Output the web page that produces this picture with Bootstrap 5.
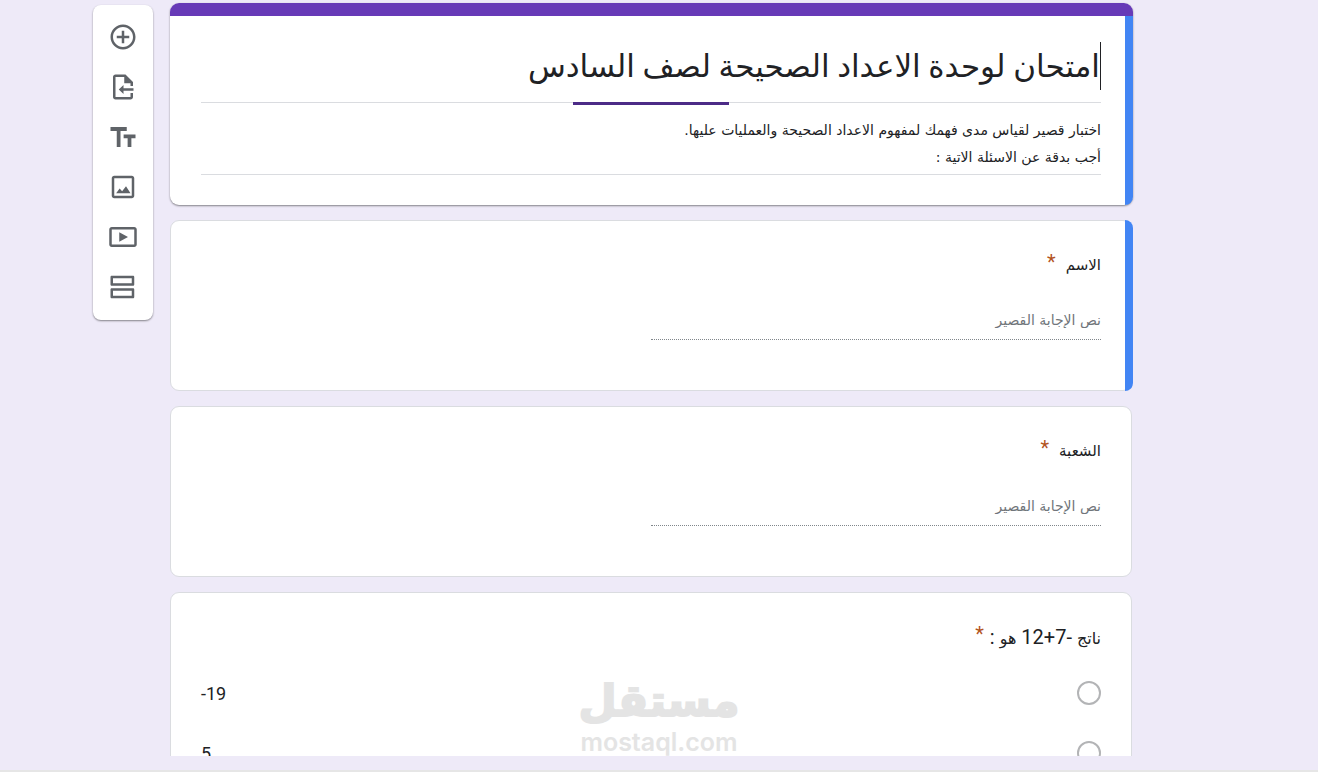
<!DOCTYPE html>
<html lang="ar" dir="rtl">
<head>
<meta charset="utf-8">
<meta name="viewport" content="width=device-width, initial-scale=1">
<title>امتحان لوحدة الاعداد الصحيحة</title>
<link href="https://cdn.jsdelivr.net/npm/bootstrap@5.3.0/dist/css/bootstrap.min.css" rel="stylesheet">
<style>
  body { background: #eeeaf8; color: #202124; font-family: Roboto, "DejaVu Sans", sans-serif; font-size: 15px; }
  .editor { border-bottom: 2px solid #e6e6e6; padding-bottom: 14px; }
  .workspace { padding: 3px 186px 0 93px; gap: 17px; direction: ltr; }
  .tools { width: 60px; margin-top: 2px; padding: 7px 0 8px; border-radius: 8px; box-shadow: 0 1px 2px rgba(0,0,0,.45); }
  .tool { height: 50px; color: #5f6368; }
  .tool svg { width: 30px; height: 30px; fill: currentColor; display: block; }
  .panel { border: 1px solid #dadce0; border-radius: 9px; padding: 29px 30px; }
  .questions { gap: 15px; }
  .lead-panel { border: 0; box-shadow: 0 1px 2px rgba(0,0,0,.45); margin-right: -1px; padding: 39px 32px 30px 31px; }
  .lead-panel::before { content: ""; position: absolute; inset: 0 0 auto 0; height: 13px; background: #673ab7; border-radius: 9px 9px 0 0; }
  .linked::after { content: ""; position: absolute; top: -1px; bottom: -1px; right: -2px; width: 8px; background: #4285f4; border-radius: 0 9px 9px 0; }
  .lead-panel.linked::after { top: 13px; bottom: 0; right: 0; border-radius: 0 0 9px 0; }
  .plain-field { border: 0; background: transparent; padding: 0; outline: 0; color: inherit; display: block; width: 100%; border-radius: 0; }
  .title-wrap { border-bottom: 1px solid #dadce0; padding-bottom: 12px; }
  .title-wrap::after { content: ""; position: absolute; bottom: -3px; left: 41.3%; width: 17.4%; height: 3px; background: #4c2b87; }
  .title-field { height: 48px; font-size: 31px; border-right: 1px solid #202124; }
  .about-field, .reply { font-family: "DejaVu Sans", sans-serif; font-size: 14px; }
  .about-field { height: 56px; margin-top: 14px; line-height: 27px; resize: none; overflow: hidden; }
  .about-wrap { border-bottom: 1px solid #dadce0; padding-bottom: 1px; }
  .ask { height: 30px; font-size: 15px; gap: 10px; }
  .ask.tight { font-size: 20px; gap: 6px; }
  .ask .ar { font-size: 16px; }
  .must { color: #b3541e; font-size: 20px; padding-bottom: 6px; }
  .short-panel { height: 171px; }
  .reply { width: 50%; height: 38px; margin-top: 22px; padding-bottom: 2px; border-bottom: 1px dotted #80868b; }
  .reply::placeholder { color: #70757a; opacity: 1; }
  .choices { padding-top: 11px; }
  .choice { height: 60px; font-size: 18px; }
  .choice .form-check-input { width: 24px; height: 24px; border: 2px solid #b3b4b6; margin: 0; background: #fff; }
  .watermark { bottom: 12px; left: 50%; transform: translateX(-50%); color: #e4e4e4; pointer-events: none; }
  .wm-ar { font: 700 44px/52px "DejaVu Sans", sans-serif; -webkit-text-stroke: 2px #e4e4e4; }
  .wm-en { font: 600 25px/31px Inter, sans-serif; }
</style>
</head>
<body>
<div class="editor vh-100 d-flex flex-column position-relative">
  <div class="workspace d-flex align-items-start flex-grow-1 overflow-hidden">
    <nav class="tools bg-white d-flex flex-column flex-shrink-0" aria-label="أدوات">
      <button type="button" class="tool btn p-0 border-0 d-flex align-items-center justify-content-center" aria-label="إضافة سؤال"><svg viewBox="0 0 24 24"><path d="M13 7h-2v4H7v2h4v4h2v-4h4v-2h-4V7zm-1-5C6.48 2 2 6.48 2 12s4.48 10 10 10 10-4.48 10-10S17.520 2 12 2zm0 18c-4.410 0-8-3.590-8-8s3.590-8 8-8 8 3.590 8 8-3.590 8-8 8z"/></svg></button>
      <button type="button" class="tool btn p-0 border-0 d-flex align-items-center justify-content-center" aria-label="استيراد أسئلة"><svg viewBox="0 0 24 24"><path d="M6 2C4.900 2 4 2.900 4 4v16c0 1.100.900 2 2 2h12c1.100 0 2-.900 2-2v-3.200h-2V20H6V4h7v5h5v2.200h2V8l-6-6zM12.400 10.400L8.600 14l3.800 3.600V15H20.400v-2h-8z"/></svg></button>
      <button type="button" class="tool btn p-0 border-0 d-flex align-items-center justify-content-center" aria-label="إضافة عنوان ووصف"><svg viewBox="0 0 24 24"><path d="M2 4v3.200h5V20h3V7.200h5V4H2zm20 6h-9.500v3h3.200v7h3v-7H22z"/></svg></button>
      <button type="button" class="tool btn p-0 border-0 d-flex align-items-center justify-content-center" aria-label="إضافة صورة"><svg viewBox="0 0 24 24"><path d="M19 5v14H5V5h14m0-2H5c-1.100 0-2 .900-2 2v14c0 1.100.900 2 2 2h14c1.100 0 2-.900 2-2V5c0-1.100-.900-2-2-2zM6.500 17l2.800-3.800 2 2.200 3.100-4 3.600 5.600z"/></svg></button>
      <button type="button" class="tool btn p-0 border-0 d-flex align-items-center justify-content-center" aria-label="إضافة فيديو"><svg viewBox="0 0 24 24"><path d="M21 6v12H3V6h18m0-2H3c-1.100 0-2 .900-2 2v12c0 1.100.900 2 2 2h18c1.100 0 2-.900 2-2V6c0-1.100-.900-2-2-2zM9 8.200v7.600l7-3.800z"/></svg></button>
      <button type="button" class="tool btn p-0 border-0 d-flex align-items-center justify-content-center" aria-label="إضافة قسم"><svg viewBox="0 0 24 24"><path d="M19 5v4H4V5h15m1-2H3c-.550 0-1 .450-1 1v6c0 .550.450 1 1 1h17c.550 0 1-.450 1-1V4c0-.550-.450-1-1-1zm-1 12v4H4v-4h15m1-2H3c-.550 0-1 .450-1 1v6c0 .550.450 1 1 1h17c.550 0 1-.450 1-1v-6c0-.550-.450-1-1-1z"/></svg></button>
    </nav>
    <main class="questions d-flex flex-column flex-grow-1" dir="rtl">
      <section class="panel lead-panel linked bg-white position-relative">
        <div class="title-wrap position-relative">
          <input class="plain-field title-field" type="text" aria-label="عنوان النموذج" value="امتحان لوحدة الاعداد الصحيحة لصف السادس">
        </div>
        <div class="about-wrap">
          <textarea class="plain-field about-field" aria-label="وصف النموذج" rows="2">اختبار قصير لقياس مدى فهمك لمفهوم الاعداد الصحيحة والعمليات عليها.
أجب بدقة عن الاسئلة الاتية :</textarea>
        </div>
      </section>
      <section class="panel short-panel linked bg-white position-relative">
        <label for="name" class="ask d-flex align-items-center"><span>الاسم</span><span class="must">*</span></label>
        <input id="name" class="plain-field reply" type="text" placeholder="نص الإجابة القصير">
      </section>
      <section class="panel short-panel bg-white">
        <label for="group" class="ask d-flex align-items-center"><span>الشعبة</span><span class="must">*</span></label>
        <input id="group" class="plain-field reply" type="text" placeholder="نص الإجابة القصير">
      </section>
      <section class="panel bg-white">
        <div class="ask tight d-flex align-items-center"><span><span class="ar">ناتج</span> -7+12 <span class="ar">هو</span> :</span><span class="must">*</span></div>
        <div class="choices">
          <div class="choice d-flex align-items-center justify-content-between"><input class="form-check-input" type="radio" name="sum" id="a1"><label for="a1" dir="ltr">-19</label></div>
          <div class="choice d-flex align-items-center justify-content-between"><input class="form-check-input" type="radio" name="sum" id="a2"><label for="a2" dir="ltr">5</label></div>
        </div>
      </section>
    </main>
  </div>
  <div class="watermark position-absolute text-center">
    <div class="wm-ar">مستقل</div>
    <div class="wm-en" dir="ltr">mostaql.com</div>
  </div>
</div>
<script src="https://cdn.jsdelivr.net/npm/bootstrap@5.3.0/dist/js/bootstrap.bundle.min.js"></script>
</body>
</html>
